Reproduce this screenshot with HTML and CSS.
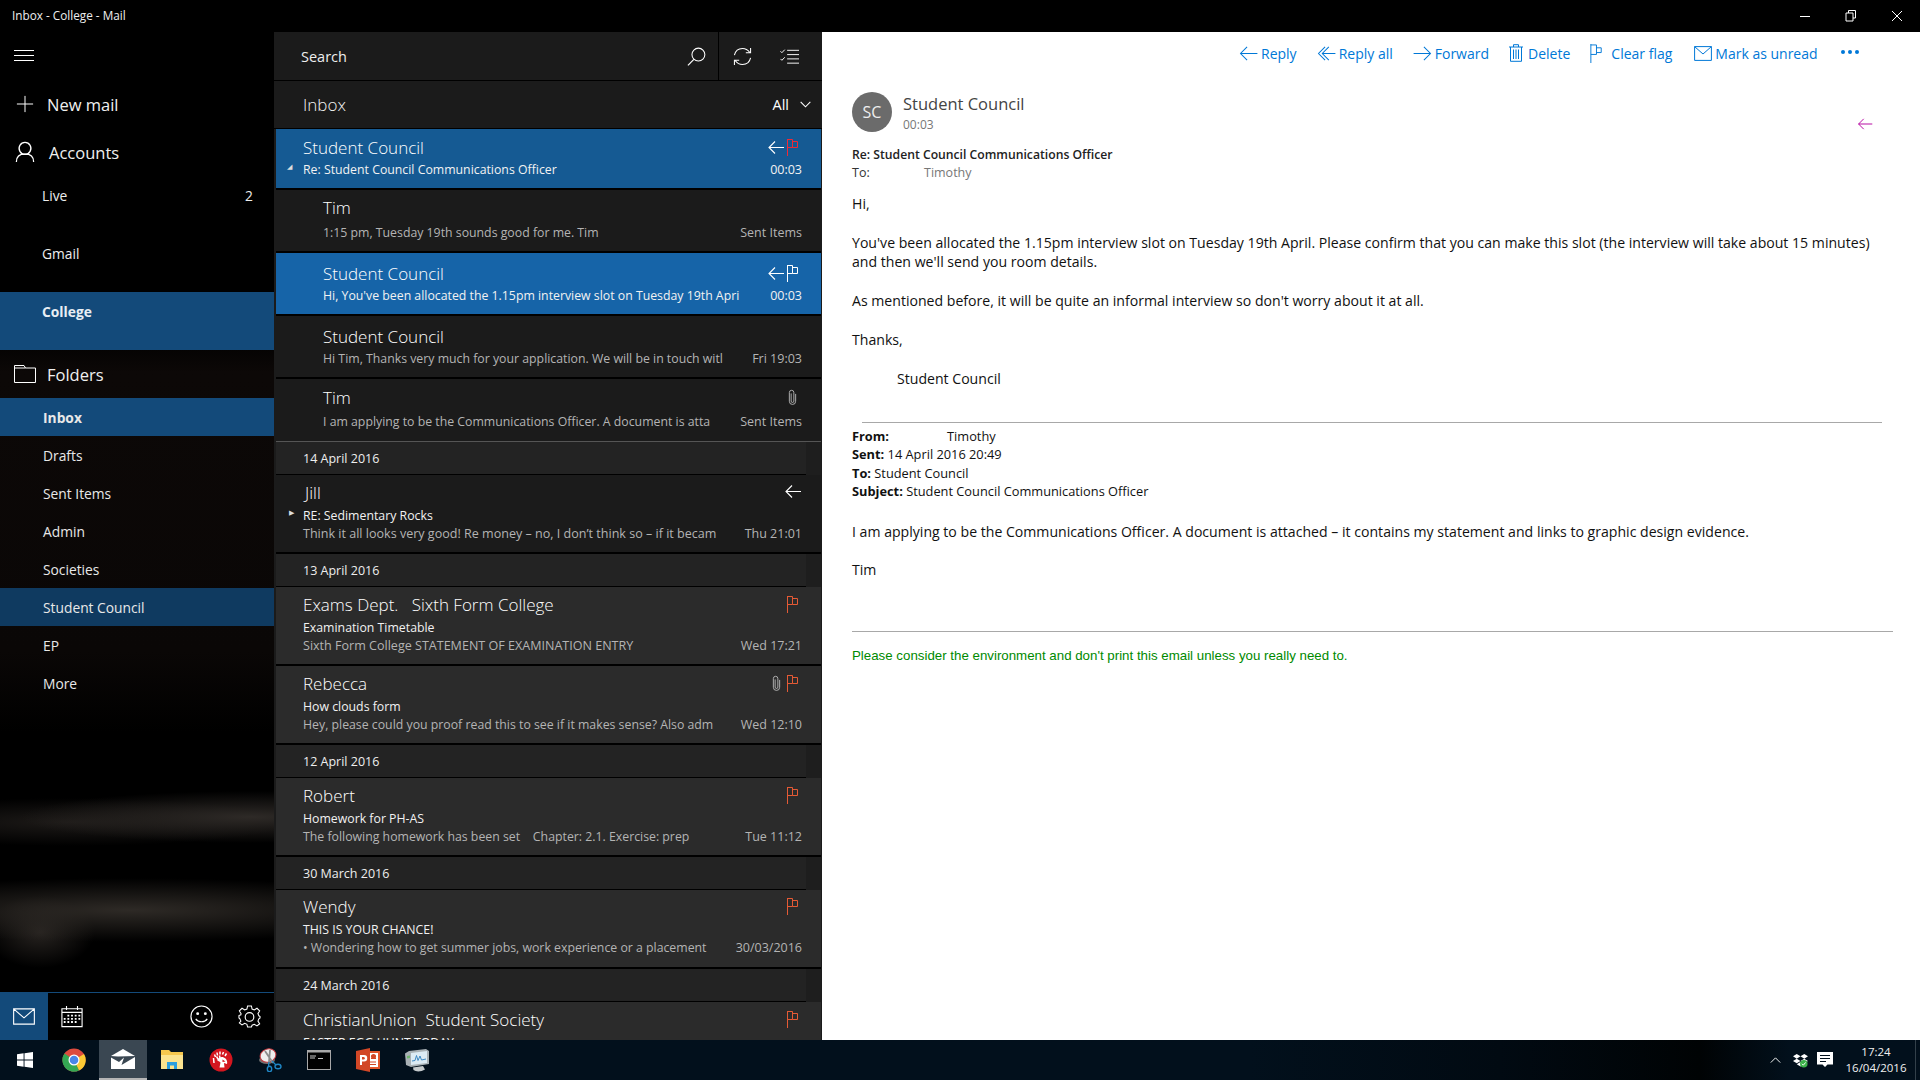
FILE: index.html
```html
<!DOCTYPE html>
<html lang="en">
<head>
<meta charset="utf-8">
<title>Inbox - College - Mail</title>
<link rel="stylesheet" href="styles.css">
</head>
<body>
<svg class="defs" width="0" height="0" aria-hidden="true">
  <symbol id="i-back" viewBox="0 0 16 13"><path d="M16 6.500H1M7 .5 1 6.500 7 12.500" fill="none" stroke="currentColor" stroke-width="1.100"/></symbol>
  <symbol id="i-flag" viewBox="0 0 11 17"><path d="M.5 0V17M.5 .5H5.500V8.500H.5M5.500 2.500H10.500V8.500H5.500" fill="none" stroke="currentColor"/></symbol>
  <symbol id="i-clip" viewBox="0 0 10 18"><path d="M3.500 4.500V13a1.500 1.500 0 0 0 3 0V3.500a2.500 2.500 0 0 0-5 0V13.200a3.500 3.500 0 0 0 7 0V5" fill="none" stroke="currentColor" stroke-width="1"/></symbol>
</svg>

<div class="app">
  <header class="titlebar">
    <span class="window-title">Inbox - College - Mail</span>
    <div class="window-controls">
      <svg class="wc" viewBox="0 0 12 12"><path d="M1 6.500H11" stroke="#fff" fill="none"/></svg>
      <svg class="wc" viewBox="0 0 12 12"><path d="M3.500 3V.5H10.500V8H8M1 3H8V11H1Z" stroke="#fff" fill="none"/></svg>
      <svg class="wc" viewBox="0 0 12 12"><path d="M1 1 11 11M11 1 1 11" stroke="#fff" fill="none"/></svg>
    </div>
  </header>

  <main class="main">
    <nav class="sidebar">
      <div class="nav-top">
        <svg class="hamburger" viewBox="0 0 20 12"><path d="M0 .5H20M0 5.500H20M0 10.500H20" stroke="#fff" fill="none"/></svg>
        <div class="nav-head new-mail">
          <svg class="nav-icon" viewBox="0 0 20 20"><path d="M10 1V19M1 10H19" stroke="#fff" fill="none" stroke-width="1.100"/></svg>
          <span>New mail</span>
        </div>
        <div class="nav-head accounts">
          <svg class="nav-icon" viewBox="0 0 22 24"><path d="M11 1.500a6.500 6.500 0 1 0 .01 0ZM1.500 23c0-6 4-9 9.500-9s9.500 3 9.500 9" stroke="#fff" fill="none" stroke-width="1.400"/></svg>
          <span>Accounts</span>
        </div>
        <div class="account"><span>Live</span><span>2</span></div>
        <div class="account"><span>Gmail</span></div>
        <div class="account selected"><span>College</span></div>
        <div class="nav-head folders">
          <svg class="nav-icon" viewBox="0 0 22 18"><path d="M.5 17.500V.5H10L11.500 3H21.500V17.500ZM.5 3H11.500" stroke="#fff" fill="none"/></svg>
          <span>Folders</span>
        </div>
        <div class="folder selected strong">Inbox</div>
        <div class="folder">Drafts</div>
        <div class="folder">Sent Items</div>
        <div class="folder">Admin</div>
        <div class="folder">Societies</div>
        <div class="folder current">Student Council</div>
        <div class="folder">EP</div>
        <div class="folder">More</div>
      </div>
      <div class="nav-bottom">
        <div class="tile active">
          <svg class="tile-icon" viewBox="0 0 24 18"><path d="M.7.7H23.300V17.300H.7ZM.7.7 12 10.500 23.300.7" stroke="#fff" fill="none" stroke-width="1.200"/></svg>
        </div>
        <div class="tile">
          <svg class="tile-icon cal" viewBox="0 0 24 24"><path d="M1 3.500H23V23H1ZM1 7.500H23M6 .5V5M18 .5V5" stroke="#fff" fill="none" stroke-width="1.200"/><path d="M7 10h2v2H7zM11 10h2v2h-2zM15 10h2v2h-2zM19 10h2v2h-2zM3 13.500h2v2H3zM7 13.500h2v2H7zM11 13.500h2v2h-2zM15 13.500h2v2h-2zM19 13.500h2v2h-2zM3 17h2v2H3zM7 17h2v2H7zM11 17h2v2h-2zM15 17h2v2h-2z" fill="#fff"/></svg>
        </div>
        <div class="spacer"></div>
        <div class="tile">
          <svg class="tile-icon round" viewBox="0 0 24 24"><circle cx="12" cy="12" r="11" stroke="#fff" fill="none" stroke-width="1.200"/><circle cx="8" cy="9" r="1.500" fill="#fff"/><circle cx="16" cy="9" r="1.500" fill="#fff"/><path d="M6 14.500c2.500 4 9.500 4 12 0" stroke="#fff" fill="none" stroke-width="1.200"/></svg>
        </div>
        <div class="tile">
          <svg class="tile-icon round" viewBox="0 0 24 24"><path d="M10 1h4l.7 3.200 2.300 1 2.800-1.800 2.800 2.800L20.800 9l1 2.300L23 12v1.500l-1.200 1-1 2.300 1.800 2.800-2.800 2.200-2.800-1.700-2.300 1L14 23h-4l-.7-2.900-2.300-1-2.800 1.700-2.800-2.200L3 16.800l-1-2.300L1 13.500V11l2-.7L3.200 9 1.400 6.200l2.800-2.800L7 5.200l2.300-1Z" stroke="#fff" fill="none" stroke-width="1.100"/><circle cx="12" cy="12.500" r="4.500" stroke="#fff" fill="none" stroke-width="1.200"/></svg>
        </div>
      </div>
    </nav>

    <section class="list-pane">
      <div class="searchbar">
        <span class="search-text">Search</span>
        <svg class="search-icon" viewBox="0 0 20 20"><circle cx="12" cy="8" r="6.800" stroke="#fff" fill="none" stroke-width="1.100"/><path d="M7.200 13 1 19.300" stroke="#fff" fill="none" stroke-width="1.300"/></svg>
        <div class="search-tools">
          <svg class="tool" viewBox="0 0 20 20"><path d="M1.500 8.500C2.500 4 6 1.500 10 1.500c3 0 5.500 1.200 7.500 4M18.500 1v5h-5M18.500 11.500c-1 4.500-4.500 7-8.500 7-3 0-5.500-1.200-7.500-4M1.500 19v-5h5" stroke="#fff" fill="none" stroke-width="1.100"/></svg>
          <svg class="tool" viewBox="0 0 20 16"><path d="M7.500 1.500H20M7.500 6H20M7.500 10.500H20M7.500 15H20M.5 2.500 2 4 5 .8M.5 10.500 2 12 5 8.800" stroke="#fff" fill="none"/></svg>
        </div>
      </div>
      <div class="inbox-head">
        <span class="inbox-title">Inbox</span>
        <span class="inbox-filter">All</span>
        <svg class="chev" viewBox="0 0 12 7"><path d="M.7.7 6 6 11.300.7" stroke="#fff" fill="none" stroke-width="1.200"/></svg>
      </div>

      <div class="rows">
        <article class="row two parent sel-dim">
          <div class="top"><span class="name">Student Council</span><span class="marks"><svg class="mark back"><use href="#i-back"/></svg><svg class="mark flag red"><use href="#i-flag"/></svg></span></div>
          <div class="sub bright"><span class="caret">◢</span><span class="txt">Re: Student Council Communications Officer</span><span class="meta">00:03</span></div>
        </article>
        <article class="row two child h62">
          <div class="top"><span class="name">Tim</span></div>
          <div class="sub"><span class="txt grey">1:15 pm, Tuesday 19th sounds good for me. Tim</span><span class="meta grey">Sent Items</span></div>
        </article>
        <article class="row two child h62 sel low">
          <div class="top"><span class="name">Student Council</span><span class="marks"><svg class="mark back"><use href="#i-back"/></svg><svg class="mark flag"><use href="#i-flag"/></svg></span></div>
          <div class="sub bright"><span class="txt">Hi, You've been allocated the 1.15pm interview slot on Tuesday 19th Apri</span><span class="meta">00:03</span></div>
        </article>
        <article class="row two child h62 low">
          <div class="top"><span class="name">Student Council</span></div>
          <div class="sub"><span class="txt grey">Hi Tim, Thanks very much for your application. We will be in touch witl</span><span class="meta grey">Fri 19:03</span></div>
        </article>
        <article class="row two child h62 rule mid">
          <div class="top"><span class="name">Tim</span><span class="marks"><svg class="mark clip"><use href="#i-clip"/></svg></span></div>
          <div class="sub"><span class="txt grey">I am applying to be the Communications Officer. A document is atta</span><span class="meta grey">Sent Items</span></div>
        </article>

        <div class="date"><span class="date-label">14 April 2016</span></div>
        <article class="row three dark">
          <div class="top"><span class="name nudge">Jill</span><span class="marks"><svg class="mark back"><use href="#i-back"/></svg></span></div>
          <div class="sub bright"><span class="caret small">▶</span><span class="txt">RE: Sedimentary Rocks</span></div>
          <div class="body"><span class="txt grey big">Think it all looks very good! Re money – no, I don’t think so – if it becam</span><span class="meta grey">Thu 21:01</span></div>
        </article>

        <div class="date"><span class="date-label">13 April 2016</span></div>
        <article class="row three">
          <div class="top"><span class="name">Exams Dept. &nbsp;&nbsp;Sixth Form College</span><span class="marks"><svg class="mark flag orange"><use href="#i-flag"/></svg></span></div>
          <div class="sub bright"><span class="txt">Examination Timetable</span></div>
          <div class="body"><span class="txt grey big">Sixth Form College STATEMENT OF EXAMINATION ENTRY</span><span class="meta grey">Wed 17:21</span></div>
        </article>
        <article class="row three">
          <div class="top"><span class="name">Rebecca</span><span class="marks"><svg class="mark clip"><use href="#i-clip"/></svg><svg class="mark flag orange"><use href="#i-flag"/></svg></span></div>
          <div class="sub bright"><span class="txt">How clouds form</span></div>
          <div class="body"><span class="txt grey">Hey, please could you proof read this to see if it makes sense? Also adm</span><span class="meta grey">Wed 12:10</span></div>
        </article>

        <div class="date"><span class="date-label">12 April 2016</span></div>
        <article class="row three">
          <div class="top"><span class="name">Robert</span><span class="marks"><svg class="mark flag orange"><use href="#i-flag"/></svg></span></div>
          <div class="sub bright"><span class="txt">Homework for PH-AS</span></div>
          <div class="body"><span class="txt grey">The following homework has been set &nbsp;&nbsp;&nbsp;Chapter: 2.1. Exercise: prep</span><span class="meta grey">Tue 11:12</span></div>
        </article>

        <div class="date"><span class="date-label">30 March 2016</span></div>
        <article class="row three">
          <div class="top high"><span class="name">Wendy</span><span class="marks"><svg class="mark flag orange"><use href="#i-flag"/></svg></span></div>
          <div class="sub bright"><span class="txt">THIS IS YOUR CHANCE!</span></div>
          <div class="body"><span class="txt grey">• Wondering how to get summer jobs, work experience or a placement</span><span class="meta grey">30/03/2016</span></div>
        </article>

        <div class="date"><span class="date-label">24 March 2016</span></div>
        <article class="row three">
          <div class="top"><span class="name">ChristianUnion &nbsp;Student Society</span><span class="marks"><svg class="mark flag orange"><use href="#i-flag"/></svg></span></div>
          <div class="sub bright"><span class="txt">EASTER EGG HUNT TODAY</span></div>
        </article>
      </div>
    </section>

    <section class="reader">
      <div class="toolbar">
        <span class="action"><svg class="act-icon" viewBox="0 0 20 16"><path d="M19.500 8H1.500M8.500 1 1.500 8l7 7" stroke="currentColor" fill="none" stroke-width="1.100"/></svg>Reply</span>
        <span class="action"><svg class="act-icon" viewBox="0 0 20 16"><path d="M19.500 8H5.500M8.500 1 1.500 8l7 7M12.500 1 5.500 8l7 7" stroke="currentColor" fill="none" stroke-width="1.100"/></svg>Reply all</span>
        <span class="action"><svg class="act-icon" viewBox="0 0 20 16"><path d="M.5 8H18.500M11.500 1l7 7-7 7" stroke="currentColor" fill="none" stroke-width="1.100"/></svg>Forward</span>
        <span class="action"><svg class="act-icon trash" viewBox="0 0 14 18"><path d="M0 3H14M4.500 3V.7H9.500V3M1.500 3V17.300H12.500V3M4.500 5.500V15M7 5.500V15M9.500 5.500V15" stroke="currentColor" fill="none"/></svg>Delete</span>
        <span class="action flag-action"><svg class="act-icon flagi" viewBox="0 0 12 20"><path d="M.6 0V20M.6 1H6.500V11H.6M6.500 4H11.500V9H6.500" stroke="currentColor" fill="none"/></svg>Clear flag</span>
        <span class="action"><svg class="act-icon mail" viewBox="0 0 18 15"><path d="M.6.6H17.400V14.400H.6ZM.6.6 9 8 17.400.6" stroke="currentColor" fill="none"/></svg>Mark as unread</span>
        <span class="dots"><i></i><i></i><i></i></span>
      </div>

      <div class="sender">
        <div class="avatar">SC</div>
        <div class="sender-info">
          <div class="sender-name">Student Council</div>
          <div class="sender-time">00:03</div>
        </div>
        <svg class="reply-mark" viewBox="0 0 18 14"><path d="M17.500 7H1.500M7.500 1 1.500 7l6 6" stroke="#b4009e" fill="none" stroke-width="1.100"/></svg>
      </div>

      <div class="subject">Re: Student Council Communications Officer</div>
      <div class="to"><span class="to-label">To:</span><span class="to-name">Timothy</span></div>

      <div class="mail-body">
        <p>Hi,</p>
        <p>You've been allocated the 1.15pm interview slot on Tuesday 19th April. Please confirm that you can make this slot (the interview will take about 15 minutes)<br>and then we'll send you room details.</p>
        <p>As mentioned before, it will be quite an informal interview so don't worry about it at all.</p>
        <p>Thanks,</p>
        <p class="signature">Student Council</p>
        <hr class="rule-one">
        <div class="quoted">
          <div class="q-line"><b class="from-label">From:</b>Timothy</div>
          <div class="q-line"><b>Sent:</b> 14 April 2016 20:49</div>
          <div class="q-line"><b>To:</b> Student Council</div>
          <div class="q-line"><b>Subject:</b> Student Council Communications Officer</div>
        </div>
        <p>I am applying to be the Communications Officer. A document is attached – it contains my statement and links to graphic design evidence.</p>
        <p>Tim</p>
        <hr class="rule-two">
        <p class="green">Please consider the environment and don't print this email unless you really need to.</p>
      </div>
    </section>
  </main>

  <footer class="taskbar">
    <div class="tb-start">
      <svg class="win" viewBox="0 0 16 16"><path d="M0 2.300 6.600 1.300V7.500H0ZM7.500 1.200 16 0V7.500H7.500ZM0 8.400H6.600V14.700L0 13.700ZM7.500 8.400H16V16L7.500 14.800Z" fill="#fff"/></svg>
    </div>
    <div class="tb-item wide">
      <svg class="app-icon" viewBox="0 0 24 24"><circle cx="12" cy="12" r="11.500" fill="#dd4b3e"/><path d="M12 12 22 6a11.500 11.500 0 0 1-5 16.500L12 12Z" fill="#fcc934"/><path d="M12 12 17 22.500A11.500 11.500 0 0 1 2.500 5.500L12 12Z" fill="#34a853"/><circle cx="12" cy="12" r="5.500" fill="#fff"/><circle cx="12" cy="12" r="4.300" fill="#4a86e8"/></svg>
    </div>
    <div class="tb-item running">
      <svg class="app-icon mailapp" viewBox="0 0 24 20"><path d="M0 7 12 0 24 7 7 7.500 0 7Z" fill="#fff"/><path d="M0 8.500 8 13 13 8.500 10.500 16 24 8V20H0Z" fill="#fff"/></svg>
    </div>
    <div class="tb-item">
      <svg class="app-icon" viewBox="0 0 24 24"><path d="M1 2H9L11 4H23V21H1Z" fill="#f5c74e"/><path d="M1 7H23V21H1Z" fill="#fbe38f"/><path d="M7 14H17V21H14V17.500H10V21H7Z" fill="#2b9fe0"/></svg>
    </div>
    <div class="tb-item">
      <svg class="app-icon" viewBox="0 0 24 24"><circle cx="12" cy="12" r="11.500" fill="#d4161f"/><path d="M5 15 4.500 10M6.500 9 5.500 6.500M8.500 7.500 8 4.500M11 6.500 11 3.500M13.500 6.500 14.500 4M16 8 17.500 5.500M9 11 7.500 8.500M11 10 10.500 7.500" stroke="#fff" stroke-width="1.500" fill="none"/><path d="M8 12C10 8.500 14 8 16.500 10.500C18 12 18.500 14.500 18 16L15 15L15.500 19.500H10.500L11.500 14.500C10.500 13.500 9 13 8 12Z" fill="#fff"/><path d="M13.500 11.500 16.500 13.500 13.500 14Z" fill="#d4161f"/></svg>
    </div>
    <div class="tb-item">
      <svg class="app-icon" viewBox="0 0 24 24"><ellipse cx="9" cy="12" rx="8" ry="4" fill="#6f6f6f"/><ellipse cx="10" cy="7.500" rx="8" ry="6.500" transform="rotate(-20 10 7.500)" fill="#eeeeee" stroke="#c63a3f"/><path d="M7 3 15 15M12 2 11 14" stroke="#8b8b8b" stroke-width="1.800" fill="none"/><path d="M14 13 18 17M11 14 10.500 18" stroke="#1f86c4" stroke-width="1.300" fill="none"/><ellipse cx="20" cy="18.500" rx="3" ry="2.200" fill="none" stroke="#1f86c4" stroke-width="1.400"/><ellipse cx="11.500" cy="21" rx="2.200" ry="2.800" fill="none" stroke="#1f86c4" stroke-width="1.400"/></svg>
    </div>
    <div class="tb-item">
      <svg class="app-icon cmd" viewBox="0 0 24 20"><rect width="24" height="20" fill="#a8a8a8"/><rect x="1" y="2.500" width="22" height="16.500" fill="#000"/><path d="M3 6H9M3 8H8M11 8.500H16" stroke="#c8c8c8" fill="none"/></svg>
    </div>
    <div class="tb-item">
      <svg class="app-icon" viewBox="0 0 24 24"><path d="M10 3H24V21H10Z" fill="#e0552c"/><path d="M10 5H22V19H10Z" fill="#fff"/><path d="M15 8H20M15 10.500H20M12 14H20M12 16.500H20" stroke="#d24726"/><circle cx="17.500" cy="8.500" r="2.500" fill="#d24726"/><path d="M0 3 14 0V24L0 21Z" fill="#d24726"/><path d="M4 17V7H8a3.200 3.200 0 0 1 0 6.500H6V17Z" fill="#fff"/><path d="M6 9V11.500H7.500a1.200 1.200 0 0 0 0-2.500Z" fill="#d24726"/></svg>
    </div>
    <div class="tb-item">
      <svg class="app-icon" viewBox="0 0 24 24"><path d="M0 5.500 4 3 21 1 24 3V16L6 19 1 17Z" fill="#a9b1b5"/><path d="M6 5 22 3V15L6 17Z" fill="#dcebf4"/><path d="M7 13 10 12.500 11.500 7.500 13 12.500 15 8 16.500 12 21 11" stroke="#3d88c2" fill="none"/><path d="M2 8 5 7.500V10L2 10.500Z" fill="#6db36d"/><path d="M8 19.500 18 18 20 21.500C16 24 11 24 8.500 22Z" fill="#c5cacc"/></svg>
    </div>
    <div class="tray">
      <svg class="chevron-up" viewBox="0 0 12 7"><path d="M.5 6.500 6 1l5.500 5.500" stroke="#fff" fill="none" stroke-width="1.100"/></svg>
      <svg class="dropbox" viewBox="0 0 16 16"><path d="M4 1 8 3.500 4 6 0 3.500ZM12 1 16 3.500 12 6 8 3.500ZM4 6 8 8.500 4 11 0 8.500ZM12 6 16 8.500 12 11 8 8.500ZM4 12 8 9.500 12 12 8 14.500Z" fill="#fff"/><circle cx="11.500" cy="11.500" r="4" fill="#3cb24a"/><path d="M9.500 11.500 11 13 13.500 10" stroke="#fff" fill="none"/></svg>
      <svg class="notify" viewBox="0 0 16 16"><path d="M0 0H16V12.500H10.500L8 15 5.500 12.500H0Z" fill="#fff"/><path d="M3 3.500H13M3 6.500H13M3 9.500H9" stroke="#02101c"/></svg>
      <div class="clock"><span>17:24</span><span>16/04/2016</span></div>
      <div class="show-desktop"></div>
    </div>
  </footer>
</div>
</body>
</html>
```

FILE: styles.css
```css
* { box-sizing: border-box; }
html, body { margin: 0; padding: 0; height: 100%; overflow: hidden; }
body { font-family: "Open Sans", "Noto Sans", sans-serif; background: #000; color: #fff; }
.defs { position: absolute; }
.app { width: 1920px; height: 1080px; display: flex; flex-direction: column; overflow: hidden; }

/* title bar */
.titlebar { height: 32px; flex: none; background: #000; display: flex; align-items: center; padding: 0 0 2px 12px; }
.window-title { font-size: 11.750px; color: #eee; }
.window-controls { margin-left: auto; display: flex; gap: 34px; padding-right: 17px; margin-top: 2px; }
.wc { width: 12px; height: 12px; display: block; }

.main { flex: 1; display: flex; min-height: 0; }

/* sidebar */
.sidebar {
  width: 274px; flex: none; display: flex; flex-direction: column; justify-content: space-between;
  background:
    radial-gradient(ellipse 230px 26px at 250px 785px, #2e2a27 0%, rgba(46,42,39,0) 100%),
    radial-gradient(ellipse 220px 24px at 70px 790px, #1d1a18 0%, rgba(29,26,24,0) 100%),
    radial-gradient(ellipse 320px 32px at 130px 878px, #2e2a26 0%, rgba(46,42,38,0) 100%),
    radial-gradient(ellipse 55px 36px at 40px 900px, #272320 0%, rgba(39,35,32,0) 100%),
    linear-gradient(#000 0, #000 300px, #0c0807 340px, #0a0706 620px, #000 700px, #000 100%);
}
.nav-top { display: flex; flex-direction: column; }
.hamburger { width: 20px; height: 12px; margin: 18px 0 0 14px; display: block; }
.nav-head { display: flex; align-items: center; font-size: 16.500px; color: #f0f0f0; height: 48px; }
.nav-icon { display: block; flex: none; }
.new-mail { margin-top: 18px; padding-left: 16px; gap: 13px; }
.new-mail .nav-icon { width: 18px; height: 18px; }
.accounts { padding-left: 15px; gap: 14px; }
.accounts .nav-icon { width: 20px; height: 22px; }
.account { height: 58px; display: flex; justify-content: space-between; align-items: flex-start; padding: 0 21px 0 42px; font-size: 13.800px; line-height: 39px; color: #eee; }
.account:first-of-type { margin-top: -5px; }
.account.selected { background: #134a7a; font-weight: 700; color: #e8eef4; }
.folders { padding-left: 14px; gap: 11px; }
.folders .nav-icon { width: 22px; height: 18px; }
.folder { height: 38px; display: flex; align-items: center; padding-left: 43px; font-size: 13.800px; color: #e8e8e8; }
.folder.selected { background: #134a7a; }
.folder.strong { font-weight: 700; }
.folder.current { background: #0f3a60; }
.nav-bottom { height: 48px; border-top: 1px solid #134a7a; display: flex; align-items: stretch; }
.tile { width: 48px; display: flex; align-items: center; justify-content: center; }
.tile.active { background: #134a7a; }
.tile-icon { width: 22px; height: 17px; display: block; }
.tile-icon.cal { width: 22px; height: 23px; }
.tile-icon.round { width: 23px; height: 23px; }
.spacer { flex: 1; }
.nav-bottom .tile:last-child { margin-right: 1px; }

/* list */
.list-pane { width: 548px; flex: none; display: flex; flex-direction: column; background: #1b1b1b; min-height: 0; }
.searchbar { height: 49px; flex: none; display: flex; align-items: center; padding-left: 27px; border-bottom: 1px solid #000; }
.search-text { font-size: 14.500px; color: #eee; }
.search-icon { width: 19px; height: 19px; margin-left: auto; margin-right: 12px; display: block; }
.search-tools { height: 100%; display: flex; align-items: center; border-left: 1px solid #000; width: 104px; padding-left: 14px; gap: 28px; }
.tool { width: 19px; height: 19px; display: block; }
.inbox-head { height: 48px; flex: none; display: flex; align-items: center; padding: 0 11px 0 29px; border-bottom: 1px solid #000; }
.inbox-title { font-size: 17px; font-weight: 300; color: #f4f4f4; margin-right: auto; }
.inbox-filter { font-size: 14.500px; margin-right: 11px; }
.chev { width: 11px; height: 7px; display: block; }

.rows { flex: 1; min-height: 0; overflow: hidden; padding-left: 2px; padding-right: 1px; }
.row { position: relative; border-bottom: 2px solid #000; background: #2b2b2b; padding: 5px 19px 0 27px; }
.row.two { background: #1b1b1b; }
.row.parent { height: 61px; padding-top: 6px; }
.row.h62 { height: 63px; }
.row.child { padding-left: 47px; }
.row.sel { background: #1664a8; }
.row.sel-dim { background: #155a93; }
.row.dark { background: #1b1b1b; }
.row.three { height: 79px; }
.row.rule { border-bottom-color: #555; border-bottom-width: 1px; }

.top { height: 24px; display: flex; justify-content: space-between; align-items: center; }
.top.high { margin-top: -1px; margin-bottom: 1px; }
.name { font-size: 17px; font-weight: 300; color: #fff; white-space: nowrap; }
.name.nudge { margin-left: 2px; }
.marks { display: flex; align-items: center; gap: 3px; padding-right: 4px; }
.mark { display: block; color: #fff; }
.mark.back { width: 16px; height: 13px; }
.mark.back:last-child { margin-right: -3px; margin-top: -2px; }
.mark.flag { width: 11px; height: 17px; }
.mark.clip { width: 9px; height: 17px; color: #bbb; margin-right: 3px; }
.mark.clip:last-child { margin-right: 1px; }
.mark.red { color: #f02a36; }
.mark.orange { color: #e55a35; }

.sub, .body { display: flex; justify-content: space-between; align-items: center; font-size: 12.300px; white-space: nowrap; position: relative; }
.sub { height: 18px; margin-top: 2px; }
.two .sub { margin-top: 4px; }
.row.parent .sub { margin-top: 1px; }
.row.low { padding-top: 8px; }
.row.low .sub { margin-top: 1px; }
.row.mid { padding-top: 6px; }
.row.mid .sub { margin-top: 3px; }
.body { height: 19px; margin-top: 0; }
.txt { flex: none; }
.txt.big { font-size: 12.550px; }
.sub .meta, .body .meta { margin-left: auto; }
.grey { color: #b4b4b4; }
.bright { color: #f2f2f2; }
.meta { text-align: right; font-size: 12.500px; }
.caret { position: absolute; left: -16px; top: 2px; font-size: 7px; color: #ddd; }
.caret.small { left: -14px; }

.date { height: 33px; background: #1e1e1e; }
.date-label { display: flex; align-items: center; width: 530px; height: 33px; background: #232323; border-bottom: 1px solid #000; padding-left: 27px; font-size: 12.500px; color: #eee; }

/* reader */
.reader { flex: 1; background: #fff; color: #222; padding-left: 30px; display: flex; flex-direction: column; min-width: 0; }
.toolbar { height: 36px; margin-top: 3px; flex: none; display: flex; align-items: center; color: #0078d7; font-size: 14px; padding-left: 387px; }
.action { display: flex; align-items: center; margin-right: 20px; gap: 3px; white-space: nowrap; }
.action.flag-action { margin-right: 22px; }
.act-icon { width: 19px; height: 15px; display: block; }
.act-icon.trash { width: 14px; height: 18px; margin-right: 2px; }
.act-icon.flagi { width: 12px; height: 19px; margin-right: 6px; }
.act-icon.mail { width: 18px; height: 15px; }
.dots { display: flex; gap: 3px; margin-left: 3px; margin-top: -2px; }
.dots i { width: 4px; height: 4px; border-radius: 50%; background: #0078d7; display: block; }

.sender { display: flex; align-items: center; margin-top: 21px; height: 40px; }
.avatar { width: 40px; height: 40px; border-radius: 50%; background: #6b6b6b; color: #eee; font-size: 16px; display: flex; align-items: center; justify-content: center; flex: none; }
.sender-info { margin-left: 11px; padding-top: 3px; }
.sender-name { font-size: 16.500px; color: #444; line-height: 24px; margin-top: -3px; }
.sender-time { font-size: 12px; color: #777; line-height: 16px; margin-top: 1px; }
.reply-mark { width: 16px; height: 12px; margin-left: auto; margin-right: 47px; margin-top: 24px; display: block; }
.subject { font-size: 12.200px; font-weight: 600; color: #222; margin-top: 14px; line-height: 18px; }
.to { font-size: 12.500px; line-height: 20px; color: #333; display: flex; margin-top: -1px; }
.to-label { width: 72px; }
.to-name { color: #777; }

.mail-body { font-size: 14.100px; line-height: 19.500px; color: #111; margin-top: 11px; }
.mail-body p { margin: 0 0 19.400px; }
.signature { padding-left: 45px; }
hr { border: 0; height: 1px; margin: 0; background: #a8a8a8; }
.rule-one { width: 1020px; margin: 33px 0 0 10px; }
.quoted { font-size: 12.800px; line-height: 18.500px; margin-top: 4px; margin-bottom: 21px; }
.q-line b { font-weight: 700; }
.from-label { display: inline-block; width: 95px; }
.rule-two { width: 1041px; margin-top: 51px; }
.green { font-family: "Liberation Sans", Arial, sans-serif; font-size: 13.300px; color: #008a00; margin-top: 14px !important; }

/* taskbar */
.taskbar {
  height: 40px; flex: none; display: flex; align-items: stretch;
  background: linear-gradient(90deg, #02101c 0, #02101c 1250px, #010a12 1500px, #000304 1700px, #02101c 1790px, #02101c 100%);
}
.tb-start { width: 49px; display: flex; align-items: center; justify-content: center; }
.win { width: 16px; height: 16px; display: block; }
.tb-item { width: 49px; display: flex; align-items: center; justify-content: center; }
.tb-item.wide { width: 50px; }
.tb-item.running { width: 48px; background: #3a4752; border-bottom: 2px solid #b5b5b5; }
.app-icon { width: 24px; height: 24px; display: block; }
.app-icon.mailapp { width: 24px; height: 20px; }
.app-icon.cmd { height: 20px; }
.tray { margin-left: auto; display: flex; align-items: center; }
.chevron-up { width: 11px; height: 6px; display: block; margin-right: 12px; }
.dropbox { width: 15px; height: 15px; display: block; margin-right: 9px; }
.notify { width: 16px; height: 16px; display: block; margin-right: 13px; }
.clock { width: 60px; display: flex; flex-direction: column; align-items: center; font-size: 11.500px; line-height: 16px; color: #f0f0f0; margin-right: 9px; }
.show-desktop { width: 1px; height: 40px; background: #33404a; margin-right: 4px; }
```
